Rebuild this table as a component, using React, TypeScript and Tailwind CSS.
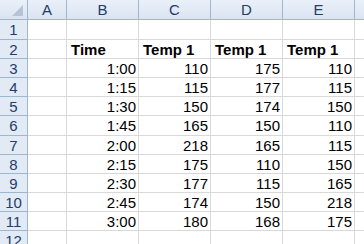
import { clsx } from 'clsx';

const cols = ['A', 'B', 'C', 'D', 'E'];

// column widths incl. right border
const colW = ['w-[39px]', 'w-[72px]', 'w-[72px]', 'w-[72px]', 'w-[72px]'];

// row heights incl. bottom border
const rowH: Record<number, string> = {
  1: 'h-[20px]',
  6: 'h-[20px]',
};

const data: [string, number, number, number][] = [
  ['1:00', 110, 175, 110],
  ['1:15', 115, 177, 115],
  ['1:30', 150, 174, 150],
  ['1:45', 165, 150, 110],
  ['2:00', 218, 165, 115],
  ['2:15', 175, 110, 150],
  ['2:30', 177, 115, 165],
  ['2:45', 174, 150, 218],
  ['3:00', 180, 168, 175],
];

function rowCells(r: number): string[] {
  if (r === 2) return ['', 'Time', 'Temp 1', 'Temp 1', 'Temp 1'];
  if (r >= 3 && r <= 11) {
    const d = data[r - 3];
    return ['', d[0], String(d[1]), String(d[2]), String(d[3])];
  }
  return ['', '', '', '', ''];
}

function App() {
  const rows = [1, 2, 3, 4, 5, 6, 7, 8, 9, 10, 11, 12];

  return (
    <div className="w-[364px] h-[244px] overflow-hidden bg-white font-['Liberation_Sans',Arial,sans-serif] text-[15px] leading-none">
      {/* column headers */}
      <div className="flex h-[20px]">
        <div className="relative w-[28px] shrink-0 border-r border-b border-[#9eb6ce] bg-linear-to-b from-[#e9f0f9] to-[#dae4f1]">
          <div className="absolute right-[4px] bottom-[3px] w-0 h-0 border-l-[11px] border-l-transparent border-b-[11px] border-b-[#b6c3d4]" />
        </div>
        {cols.map((c, i) => (
          <div
            key={c}
            className={clsx(
              colW[i],
              'shrink-0 flex items-center justify-center border-r border-b border-[#9eb6ce] bg-linear-to-b from-[#e9f0f9] to-[#dae4f1] text-[#233d68]'
            )}
          >
            {c}
          </div>
        ))}
        <div className="flex-1 border-b border-[#9eb6ce] bg-linear-to-b from-[#e9f0f9] to-[#dae4f1]" />
      </div>

      {rows.map((r) => {
        const cells = rowCells(r);
        return (
          <div key={r} className={clsx('flex', rowH[r] ?? 'h-[19px]')}>
            <div className="w-[28px] shrink-0 flex items-center justify-center border-r border-b border-[#9eb6ce] bg-[#e2eaf6] text-[#233d68]">
              {r}
            </div>
            {cells.map((v, i) => (
              <div
                key={i}
                className={clsx(
                  colW[i],
                  'shrink-0 flex items-center px-[2px] border-r border-b border-[#d9d9d9] text-black',
                  r === 2 ? 'justify-start font-bold pl-[4px]' : 'justify-end'
                )}
              >
                {v}
              </div>
            ))}
            <div className="flex-1 border-b border-[#d9d9d9]" />
          </div>
        );
      })}
    </div>
  );
}

export default App;
